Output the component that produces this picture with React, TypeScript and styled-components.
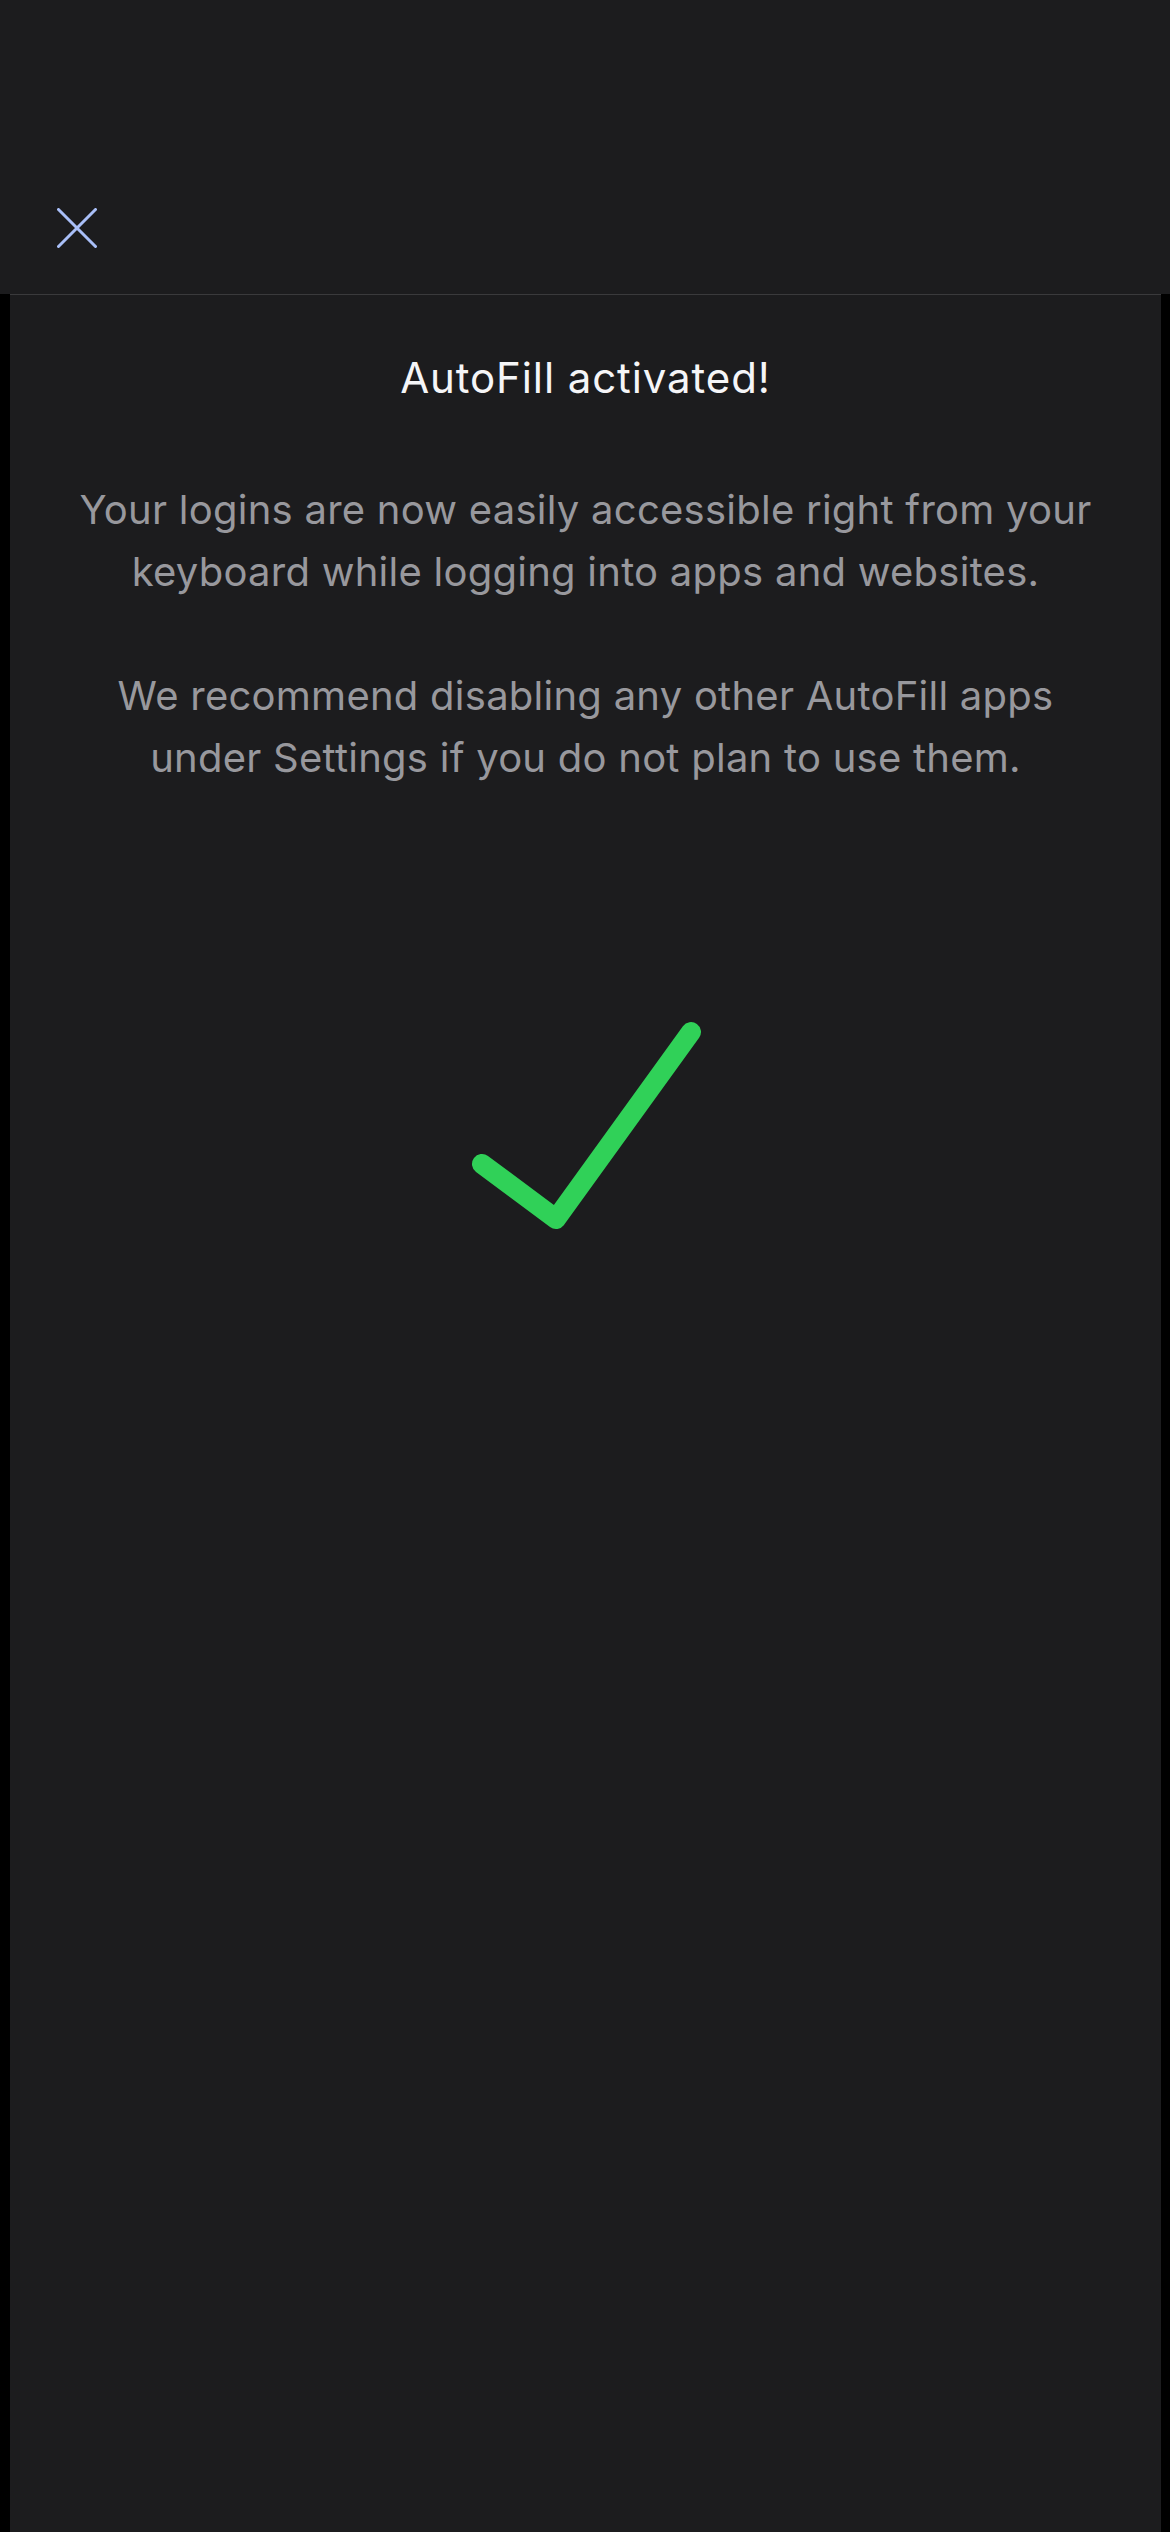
import React from 'react';
import styled, { createGlobalStyle } from 'styled-components';

const GlobalStyle = createGlobalStyle`
  html, body {
    margin: 0;
    padding: 0;
    background: #000;
  }
  body {
    font-family: Inter, "Noto Sans", sans-serif;
    -webkit-font-smoothing: antialiased;
  }
`;

const Screen = styled.div`
  display: flex;
  flex-direction: column;
  width: 1170px;
  height: 2532px;
  background: #000;
  overflow: hidden;
`;

const Header = styled.header`
  flex: none;
  height: 294px;
  display: flex;
  align-items: flex-end;
  padding: 0 0 46px 57px;
  box-sizing: border-box;
  background: #1c1c1e;
`;

const CloseButton = styled.button`
  width: 40px;
  height: 40px;
  padding: 0;
  border: 0;
  background: transparent;
  display: flex;
  align-items: center;
  justify-content: center;
  cursor: pointer;
`;

const Sheet = styled.main`
  flex: 1;
  margin: 0 9px 0 10px;
  border-top: 1px solid #3a3a3c;
  background: #1c1c1e;
  display: flex;
  flex-direction: column;
  align-items: center;
  padding: 57px 60px 0;
`;

const Title = styled.h1`
  margin: 0;
  font-size: 42px;
  line-height: 52px;
  font-weight: 400;
  letter-spacing: 0.9px;
  color: #f5f5f7;
  text-align: center;
`;

const Body = styled.p<{ $gap: number }>`
  margin: ${(p) => p.$gap}px 0 0;
  font-size: 40px;
  line-height: 62px;
  font-weight: 400;
  letter-spacing: 0.25px;
  color: #98989d;
  text-align: center;
`;

const Check = styled.svg`
  margin-top: 228px;
  display: block;
`;

export default function App() {
  return (
    <>
      <GlobalStyle />
      <Screen>
        <Header>
          <CloseButton aria-label="Close">
            <svg width="40" height="40" viewBox="0 0 40 40">
              <path
                d="M1.5 1.5 L38.5 38.5 M38.5 1.5 L1.5 38.5"
                stroke="#a9bff8"
                strokeWidth="3"
                strokeLinecap="round"
                fill="none"
              />
            </svg>
          </CloseButton>
        </Header>
        <Sheet>
          <Title>AutoFill activated!</Title>
          <Body $gap={75}>
            Your logins are now easily accessible right from your keyboard while logging into apps and websites.
          </Body>
          <Body $gap={62}>
            We recommend disabling any other AutoFill apps under Settings if you do not plan to use them.
          </Body>
          <Check width="240" height="220" viewBox="0 0 240 220">
            <path
              d="M16 147 L90 202 L225 15"
              stroke="#30d158"
              strokeWidth="20"
              strokeLinecap="round"
              strokeLinejoin="round"
              fill="none"
            />
          </Check>
        </Sheet>
      </Screen>
    </>
  );
}
